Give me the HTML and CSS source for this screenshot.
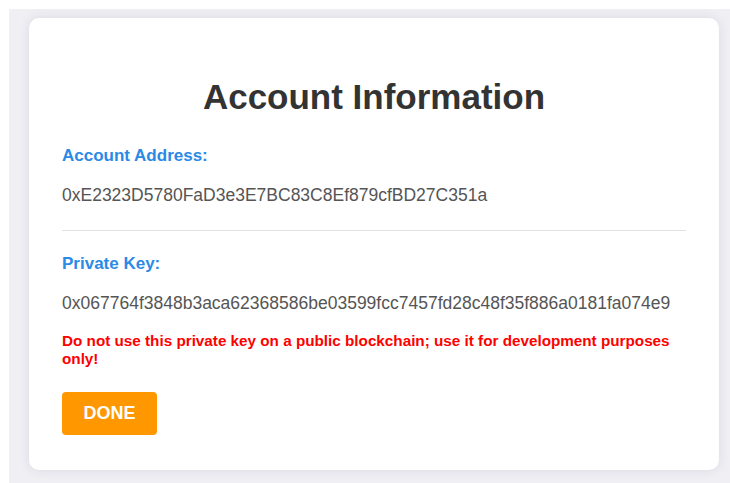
FILE: index.html
```html
<!DOCTYPE html>
<html lang="en">
<head>
<meta charset="utf-8">
<title>Account Information</title>
<link rel="stylesheet" href="styles.css">
</head>
<body>
<div class="page">
  <div class="card">
    <h1 class="title">Account Information</h1>
    <section class="field">
      <h2 class="label">Account Address:</h2>
      <p class="value">0xE2323D5780FaD3e3E7BC83C8Ef879cfBD27C351a</p>
    </section>
    <hr class="divider">
    <section class="field">
      <h2 class="label">Private Key:</h2>
      <p class="value">0x067764f3848b3aca62368586be03599fcc7457fd28c48f35f886a0181fa074e9</p>
      <p class="warning">Do not use this private key on a public blockchain; use it for development purposes only!</p>
    </section>
    <button class="done" type="button">DONE</button>
  </div>
</div>
</body>
</html>
```
FILE: styles.css
```css
html, body {
  margin: 0;
  padding: 0;
  background: #ffffff;
  font-family: "Liberation Sans", Arial, sans-serif;
}

.page {
  box-sizing: border-box;
  min-height: calc(100vh - 9px);
  margin: 9px 0 0 9px;
  padding: 9px 11px 13px 20px;
  background: #efeff4;
}

.card {
  background: #ffffff;
  border-radius: 10px;
  box-shadow: 0 0 12px rgba(40, 40, 80, 0.10);
  padding: 0 33px 35px;
  display: flex;
  flex-direction: column;
  align-items: flex-start;
}

.title {
  align-self: stretch;
  text-align: center;
  margin: 59px 0 0;
  font-size: 35px;
  line-height: 40px;
  font-weight: bold;
  color: #333333;
}

.field {
  display: flex;
  flex-direction: column;
}

.label {
  margin: 29px 0 0;
  font-size: 17px;
  line-height: 20px;
  font-weight: bold;
  color: #2a8ae6;
}

.value {
  margin: 19px 0 0;
  font-size: 17.5px;
  line-height: 20px;
  color: #555555;
}

.divider {
  align-self: stretch;
  margin: 25px 0 0;
  border: 0;
  border-top: 1px solid #e2e2e2;
  height: 0;
}

.divider + .field .label {
  margin-top: 23px;
}

.warning {
  margin: 19px 0 0;
  font-size: 15.25px;
  line-height: 18px;
  font-weight: bold;
  color: #ff0000;
}

.done {
  margin-top: 24px;
  width: 95px;
  height: 43px;
  border: 0;
  border-radius: 4px;
  background: #ff9800;
  color: #ffffff;
  font-family: "Liberation Sans", Arial, sans-serif;
  font-size: 18px;
  font-weight: bold;
  padding: 0;
}
```
